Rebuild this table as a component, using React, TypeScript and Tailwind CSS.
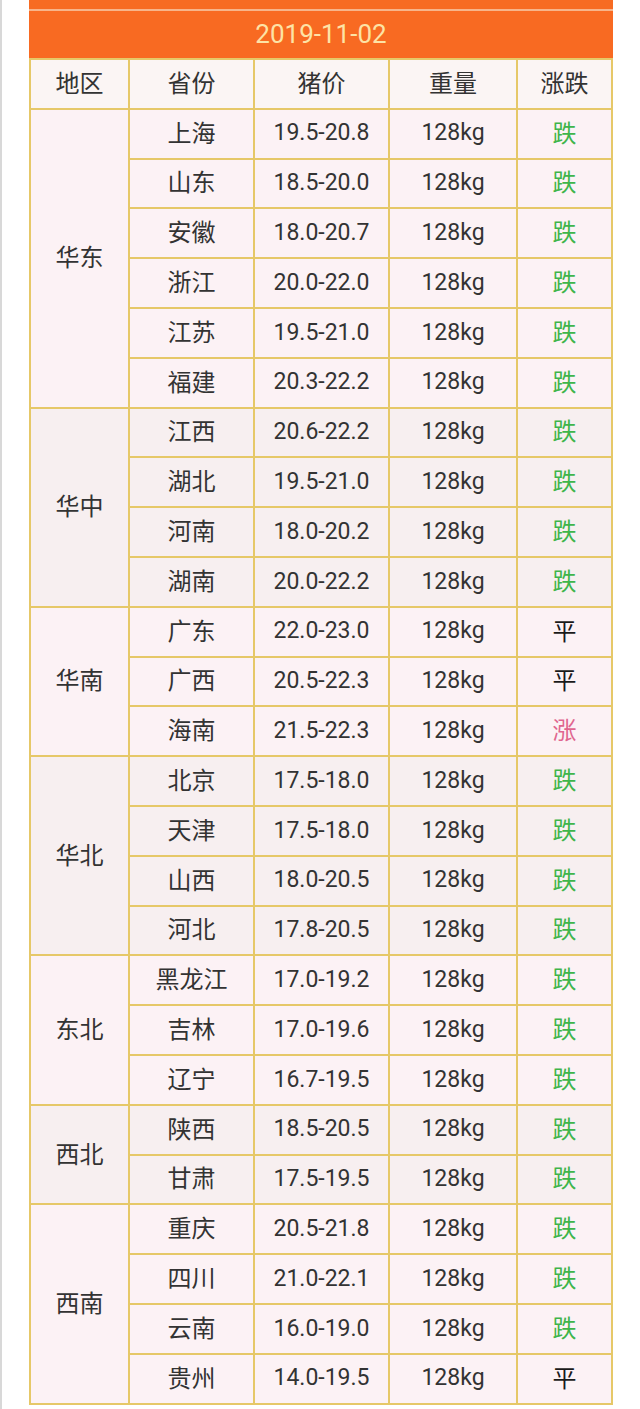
const groups: { region: string; rows: [string, string, string][] }[] = [
  {
    region: "华东",
    rows: [
      ["上海", "19.5-20.8", "跌"],
      ["山东", "18.5-20.0", "跌"],
      ["安徽", "18.0-20.7", "跌"],
      ["浙江", "20.0-22.0", "跌"],
      ["江苏", "19.5-21.0", "跌"],
      ["福建", "20.3-22.2", "跌"],
    ],
  },
  {
    region: "华中",
    rows: [
      ["江西", "20.6-22.2", "跌"],
      ["湖北", "19.5-21.0", "跌"],
      ["河南", "18.0-20.2", "跌"],
      ["湖南", "20.0-22.2", "跌"],
    ],
  },
  {
    region: "华南",
    rows: [
      ["广东", "22.0-23.0", "平"],
      ["广西", "20.5-22.3", "平"],
      ["海南", "21.5-22.3", "涨"],
    ],
  },
  {
    region: "华北",
    rows: [
      ["北京", "17.5-18.0", "跌"],
      ["天津", "17.5-18.0", "跌"],
      ["山西", "18.0-20.5", "跌"],
      ["河北", "17.8-20.5", "跌"],
    ],
  },
  {
    region: "东北",
    rows: [
      ["黑龙江", "17.0-19.2", "跌"],
      ["吉林", "17.0-19.6", "跌"],
      ["辽宁", "16.7-19.5", "跌"],
    ],
  },
  {
    region: "西北",
    rows: [
      ["陕西", "18.5-20.5", "跌"],
      ["甘肃", "17.5-19.5", "跌"],
    ],
  },
  {
    region: "西南",
    rows: [
      ["重庆", "20.5-21.8", "跌"],
      ["四川", "21.0-22.1", "跌"],
      ["云南", "16.0-19.0", "跌"],
      ["贵州", "14.0-19.5", "平"],
    ],
  },
];

const trendColor = (t: string) =>
  t === "跌" ? "text-[#3fb54a]" : t === "涨" ? "text-[#e0668f]" : "text-[#1a1a1a]";

const cell = "border-2 border-[#e6c868] text-center align-middle";
const cjk = "text-[24px]";
const num = "text-[23px]";

export default function App() {
  return (
    <div
      className="w-[640px] h-[1409px] bg-white overflow-hidden border-l-2 border-[#d8d8d8]"
      style={{ fontFamily: 'Roboto, "Noto Sans CJK SC", sans-serif' }}
    >
      <div className="ml-[27px] w-[584px]">
        {/* 顶部橙条 */}
        <div className="h-[9px] bg-[#f76b22]" />
        <div className="h-[2px] bg-[#f7b48a]" />
        <div className="h-[47px] bg-[#f86a22] flex items-center justify-center text-[26px] text-[#fde3a6]">
          2019-11-02
        </div>

        <table className="w-full border-collapse table-fixed text-[#333]">
          <colgroup>
            <col className="w-[99px]" />
            <col className="w-[125px]" />
            <col className="w-[135px]" />
            <col className="w-[128px]" />
            <col />
          </colgroup>
          <thead>
            <tr className="h-[49.8px] bg-[#fbf5f4]">
              {["地区", "省份", "猪价", "重量", "涨跌"].map((h) => (
                <th key={h} className={`${cell} ${cjk} font-normal`}>
                  {h}
                </th>
              ))}
            </tr>
          </thead>
          <tbody>
            {groups.map((g, gi) =>
              g.rows.map((r, ri) => (
                <tr
                  key={r[0]}
                  className={`h-[49.8px] ${gi % 2 === 0 ? "bg-[#fcf2f5]" : "bg-[#f7eff0]"}`}
                >
                  {ri === 0 && (
                    <td rowSpan={g.rows.length} className={`${cell} ${cjk}`}>
                      {g.region}
                    </td>
                  )}
                  <td className={`${cell} ${cjk}`}>{r[0]}</td>
                  <td className={`${cell} ${num}`}>{r[1]}</td>
                  <td className={`${cell} ${num}`}>128kg</td>
                  <td className={`${cell} ${cjk} ${trendColor(r[2])}`}>{r[2]}</td>
                </tr>
              ))
            )}
          </tbody>
        </table>
      </div>
    </div>
  );
}
